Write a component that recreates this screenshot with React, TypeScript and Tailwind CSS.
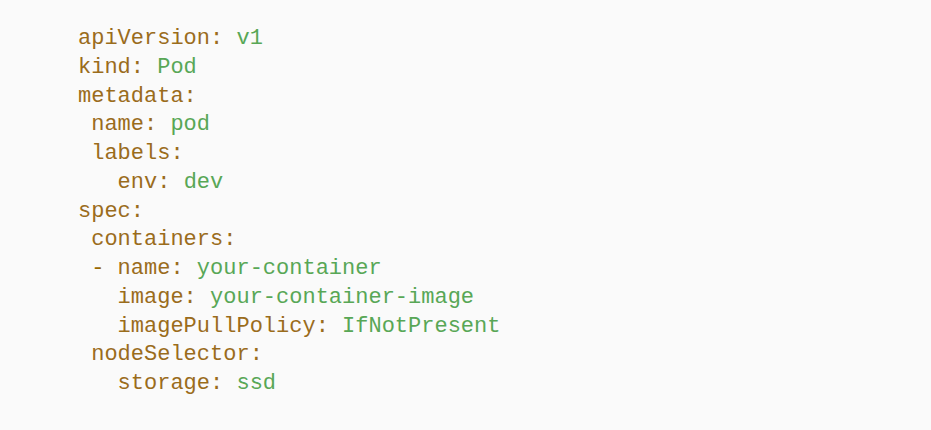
import React from "react";

type Line = { indent: string; key: string; value?: string };

const lines: Line[] = [
  { indent: "", key: "apiVersion:", value: "v1" },
  { indent: "", key: "kind:", value: "Pod" },
  { indent: "", key: "metadata:" },
  { indent: " ", key: "name:", value: "pod" },
  { indent: " ", key: "labels:" },
  { indent: "   ", key: "env:", value: "dev" },
  { indent: "", key: "spec:" },
  { indent: " ", key: "containers:" },
  { indent: " - ", key: "name:", value: "your-container" },
  { indent: "   ", key: "image:", value: "your-container-image" },
  { indent: "   ", key: "imagePullPolicy:", value: "IfNotPresent" },
  { indent: " ", key: "nodeSelector:" },
  { indent: "   ", key: "storage:", value: "ssd" },
];

export default function App() {
  return (
    <div className="w-[931px] h-[430px] bg-[#fafafa] overflow-hidden">
      <pre className="m-0 pl-[78px] pt-[25px] font-['Liberation_Mono','Courier_New',monospace] text-[22px] leading-[28.75px] text-[#986801] whitespace-pre">
        {lines.map((l, i) => (
          <div key={i}>
            {l.indent}
            <span className="text-[#9a6c1c]">{l.key}</span>
            {l.value !== undefined && (
              <>
                {" "}
                <span className="text-[#58a756]">{l.value}</span>
              </>
            )}
          </div>
        ))}
      </pre>
    </div>
  );
}
